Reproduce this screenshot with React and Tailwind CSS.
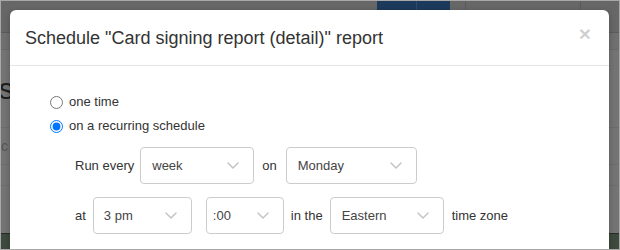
import React from "react"

const Chevron = () => (
  <svg width="12" height="7" viewBox="0 0 12 7" fill="none" className="shrink-0">
    <path d="M1 1l5 5 5-5" stroke="#c4c4c4" strokeWidth="1.5" strokeLinecap="round" strokeLinejoin="round" />
  </svg>
)

const Select = ({ value, className, pad = "pl-[11px]" }) => (
  <div
    className={`flex h-[37px] items-center justify-between rounded-[4px] border border-[#cccccc] bg-white ${pad} pr-[14px] text-[13px] text-[#444] ${className}`}
  >
    <span>{value}</span>
    <Chevron />
  </div>
)

const BackdropPage = () => (
  <div className="absolute inset-0 flex flex-col bg-[#747474]">
    {/* navbar */}
    <div className="relative h-[32px] border-b border-[#5c5c5c] bg-[#676767]">
      <div className="absolute left-[376px] top-0 flex h-[10px] w-[73px] bg-[#1b3a5c]">
        <div className="w-[40px] border-r border-[#2c4a6c]"></div>
      </div>
      <div className="absolute left-[464px] top-0 h-[10px] w-px bg-[#5a5a5a]"></div>
      <div className="absolute left-[579px] top-0 h-[10px] w-px bg-[#5a5a5a]"></div>
    </div>
    <div className="h-[17px] border-b border-[#6a6a6a] bg-[#707070]"></div>
    <div className="flex h-[78px] items-center border-b border-[#6c6c6c]">
      <span className="-ml-[19px] text-[30px] leading-none text-[#1e1e1e]">ns</span>
    </div>
    <div className="flex h-[37px] items-center border-b border-[#6c6c6c]">
      <span className="-ml-[7px] text-[14px] text-[#555]">tic</span>
    </div>
    <div className="h-[21px] border-b border-[#6c6c6c]"></div>
    <div className="flex h-[47px] items-center">
      <span className="ml-[13px] text-[16px] text-[#3a3a3a]">C</span>
    </div>
    <div className="flex-1 border-t border-[#2a2a2a] bg-[#3e4a3e]"></div>
  </div>
)

export default function App() {
  return (
    <div className="relative h-[250px] w-[620px] overflow-hidden border border-[#a8a8a8] [font-family:'Liberation_Sans',Arial,sans-serif]">
      <BackdropPage />
      <div className="absolute left-[9px] top-[9px] h-[260px] w-[599px] rounded-t-[6px] bg-white shadow-[0_2px_6px_rgba(0,0,0,0.25)]">
        <div className="flex h-[56px] items-center justify-between border-b border-[#e5e5e5] pl-[15px] pr-[18px]">
          <h4 className="text-[18px] leading-none text-[#333]">Schedule "Card signing report (detail)" report</h4>
          <span className="-mt-[8px] text-[21px] font-bold leading-none text-black/20">×</span>
        </div>
        <div className="pl-[40px] pt-[24px] text-[13px] text-[#333]">
          <label className="flex h-[24px] items-center gap-[6px]">
            <input type="radio" name="freq" className="m-0 h-[13px] w-[13px]" />
            <span>one time</span>
          </label>
          <label className="flex h-[24px] items-center gap-[6px]">
            <input type="radio" name="freq" defaultChecked className="m-0 h-[13px] w-[13px]" />
            <span>on a recurring schedule</span>
          </label>
          <div className="pl-[25px] pt-[9px]">
            <div className="flex items-center">
              <span>Run every</span>
              <Select value="week" className="ml-[6px] w-[114px]" />
              <span className="ml-[8px]">on</span>
              <Select value="Monday" className="ml-[9px] w-[131px]" />
            </div>
            <div className="mt-[13px] flex items-center">
              <span>at</span>
              <Select value="3 pm" className="ml-[7px] w-[99px]" pad="pl-[10px]" />
              <Select value=":00" className="ml-[14px] w-[78px]" pad="pl-[6px]" />
              <span className="ml-[7px]">in the</span>
              <Select value="Eastern" className="ml-[7px] w-[114px]" />
              <span className="ml-[8px]">time zone</span>
            </div>
          </div>
        </div>
      </div>
    </div>
  )
}
